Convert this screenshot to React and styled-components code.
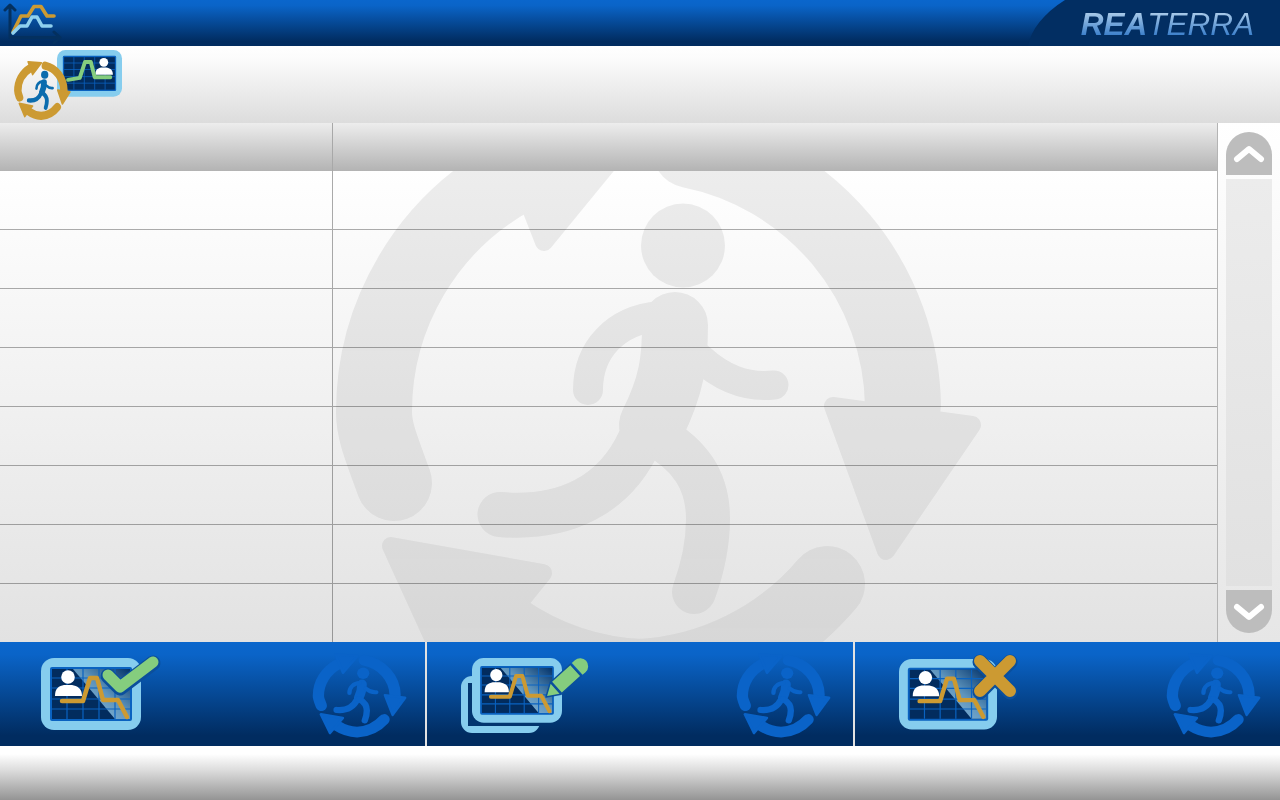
import React from "react";
import styled, { createGlobalStyle } from "styled-components";

const Global = createGlobalStyle`
  html, body {
    margin: 0;
    padding: 0;
    height: 100%;
    overflow: hidden;
    background: #fff;
    font-family: "Liberation Sans", Arial, sans-serif;
  }
`;

const Page = styled.div`
  width: 1280px;
  height: 800px;
  display: flex;
  flex-direction: column;
`;

const TopBar = styled.header`
  height: 46px;
  flex: none;
  display: flex;
  justify-content: space-between;
  background: linear-gradient(#0a66cc, #0a64c8 12%, #012c60 90%);
`;

const BrandTab = styled.div`
  width: 252px;
  height: 46px;
  box-sizing: border-box;
  padding: 1px 24px 0 0;
  display: flex;
  align-items: center;
  justify-content: flex-end;
  background: #022e62;
  clip-path: path("M0 46 C3 30 15 14 37 0 L252 0 L252 46 Z");
`;

const Brand = styled.div`
  font-size: 31.5px;
  line-height: 36px;
  font-style: italic;
  padding-right: 2px;
  background: linear-gradient(#a6c8e8 20%, #3f82cc 80%);
  -webkit-background-clip: text;
  background-clip: text;
  color: transparent;

  b {
    font-weight: 700;
  }
`;

const SubBar = styled.div`
  height: 77px;
  flex: none;
  box-sizing: border-box;
  padding: 4px 0 0 14px;
  display: flex;
  align-items: flex-start;
  background: linear-gradient(#fff, #fcfcfc 15%, #dcdcdc);
`;

const Main = styled.main`
  height: 519px;
  flex: none;
  display: flex;
`;

const Table = styled.section`
  width: 1217px;
  flex: none;
  display: flex;
  flex-direction: column;
`;

const HeadRow = styled.div`
  height: 48px;
  flex: none;
  display: grid;
  grid-template-columns: 333px 1fr;
  background: linear-gradient(#ededed, #b3b3b3);
`;

const HeadCell = styled.div`
  border-right: ${(p) => (p.$first ? "1px solid #a8a8a8" : "none")};
`;

const TableBody = styled.div`
  position: relative;
  flex: 1;
  overflow: hidden;
  background: linear-gradient(#fff, #e2e2e2);
`;

const Row = styled.div`
  position: relative;
  box-sizing: border-box;
  height: 59px;
  display: grid;
  grid-template-columns: 333px 1fr;
  border-bottom: 1px solid rgba(0, 0, 0, 0.32);

  &:last-child {
    border-bottom: none;
  }
`;

const Cell = styled.div`
  border-right: ${(p) => (p.$first ? "1px solid rgba(0, 0, 0, 0.33)" : "none")};
`;

const ScrollColumn = styled.aside`
  width: 63px;
  flex: none;
  box-sizing: border-box;
  padding: 9px 8px;
  display: flex;
  flex-direction: column;
  gap: 4px;
  border-left: 1px solid #b4b4b4;
  background: linear-gradient(#fff, #e6e6e6);
`;

const ScrollButton = styled.button`
  height: 43px;
  flex: none;
  padding: 0;
  border: none;
  display: flex;
  align-items: center;
  justify-content: center;
  background: #bdbdbd;
  border-radius: ${(p) => (p.$down ? "0 0 23px 23px" : "23px 23px 0 0")};
`;

const ScrollTrack = styled.div`
  flex: 1;
  background: linear-gradient(#ececec, #e1e1e1);
`;

const ActionBar = styled.footer`
  height: 104px;
  flex: none;
  display: grid;
  grid-template-columns: 425px 428px 427px;
`;

const ActionButton = styled.button`
  border: none;
  border-left: ${(p) => (p.$divided ? "2px solid #e2e2e2" : "none")};
  padding: 2px ${(p) => p.$right}px 0 ${(p) => p.$left}px;
  display: flex;
  align-items: center;
  justify-content: space-between;
  background: linear-gradient(#0a66cc, #0a64c8 12%, #012c60 90%);
`;

const BottomStrip = styled.div`
  flex: 1;
  background: linear-gradient(#fff 15%, #dcdcdc 45%, #949494);
`;

const Arrow = ({ points, fill }) => (
  <polygon points={points} fill={fill} stroke={fill} strokeWidth="18" strokeLinejoin="round" />
);

// ring and runner are drawn in the coordinates of the big watermark
const RunningRing = ({ className, ring, runner, weight = 76 }) => (
  <svg className={className} viewBox="330 90 655 630" preserveAspectRatio="none" aria-hidden="true">
    <g fill="none" stroke={ring} strokeWidth={weight} strokeLinecap="round">
      <path d="M690 150 A265 265 0 0 1 903 405" />
      <path d="M827 584 A265 265 0 0 1 641 677 A265 265 0 0 1 504 631" />
      <path d="M394 483 C380 445 374 430 374 412 A268 268 0 0 1 513 177" />
    </g>
    <Arrow fill={ring} points="833,406 972,425 886,551" />
    <Arrow fill={ring} points="544,242 492,109 644,120" />
    <Arrow fill={ring} points="543,573 454,684 391,546" />
    <ellipse cx="683" cy="245.5" rx="42" ry="42" fill={runner} />
    <g fill="none" stroke={runner} strokeLinecap="round">
      <path strokeWidth="66" d="M675 325 C675 360 672 385 652 425" />
      <path strokeWidth="30" d="M660 316 C615 320 588 350 588 390" />
      <path strokeWidth="29" d="M700 358 C722 378 745 388 774 385" />
      <path strokeWidth="45" d="M640 440 C615 495 565 520 500 514.5" />
      <path strokeWidth="44" d="M655 435 C690 455 708 480 708 519 C708 545 702 570 694 592" />
    </g>
  </svg>
);

const Watermark = styled(RunningRing)`
  position: absolute;
  left: 330px;
  top: -81px;
  width: 655px;
  height: 630px;
  opacity: 0.065;
  -webkit-mask-image: linear-gradient(#000 30%, rgba(0, 0, 0, 0.65));
  mask-image: linear-gradient(#000 30%, rgba(0, 0, 0, 0.65));
`;

const ButtonRing = styled(RunningRing)`
  flex: none;
  width: 95px;
  height: 86px;
`;

const BadgeRing = styled(RunningRing)`
  position: relative;
  flex: none;
  width: 57px;
  height: 60px;
  margin-top: 10px;
`;

const BadgeMonitor = styled.svg`
  flex: none;
  width: 66px;
  height: 48px;
  margin-left: -14px;
`;

const ActionIcon = styled.svg`
  flex: none;
  width: 140px;
  height: 90px;
`;

const Gloss = () => (
  <linearGradient id="gloss" x1="0" y1="1" x2="1" y2="0">
    <stop offset="0" stopColor="#9cc9e6" />
    <stop offset="0.55" stopColor="#5d94bd" />
    <stop offset="1" stopColor="#02326a" />
  </linearGradient>
);

// frame is 100 x 72 before scaling
const MonitorFrame = ({ x = 0, y = 0, scale = 1, gloss, children }) => (
  <g transform={`translate(${x} ${y}) scale(${scale})`}>
    <rect width="100" height="72" rx="13" fill="#86cdee" />
    <rect x="9" y="9" width="82" height="54" rx="2" fill="#0a62c0" />
    <rect x="11" y="11" width="78" height="50" fill="#022c5e" />
    {gloss && <polygon points="32,11 89,11 89,61 74,61" fill="url(#gloss)" />}
    <g stroke="#0a62c0" strokeWidth="1.2" fill="none">
      <path d="M26 11V61M42 11V61M58 11V61M74 11V61" />
      <path d="M11 20H89M11 30H89M11 41H89M11 51H89" />
    </g>
    {children}
  </g>
);

const Person = ({ dx = 0 }) => (
  <g transform={`translate(${dx} 0)`} fill="#fff">
    <circle cx="27" cy="19" r="6.8" />
    <path d="M14 38 C14 30 18 28 23 27 L31 27 C36 28 41 30 41 38 Z" />
  </g>
);

const TrendLine = ({ points, color, weight = 4.5 }) => (
  <polyline points={points} fill="none" stroke={color} strokeWidth={weight} strokeLinecap="round" strokeLinejoin="round" />
);

const GOLD = "#cc9a32";
const GREEN = "#85cd7e";
const EDGE = "#0b4f9c";
const ORANGE_LINE = "21,43 42,43 49,20 56,20 62,42 77,42 86,59";

const AppLogo = () => (
  <svg width="62" height="46" viewBox="0 0 62 46" aria-hidden="true" fill="none" strokeLinecap="round" strokeLinejoin="round">
    <path d="M10 37V6M5 10L10 5L15 10M10 37.5H58M54 32L60 37.5L54 43" stroke="#04305f" strokeWidth="3" />
    <polyline points="13,32 21,16 28,16 34,6.5 41,6.5 47,16 54,16" stroke={GOLD} strokeWidth="3.6" />
    <polyline points="13,33 20,26 27,26 32,17 37,17 42,26 51,26" stroke="#8fd0ee" strokeWidth="3.6" />
  </svg>
);

const AcceptIcon = () => (
  <ActionIcon viewBox="0 0 140 90" aria-hidden="true">
    <defs><Gloss /></defs>
    <MonitorFrame x={6} y={8} gloss>
      <Person />
      <TrendLine points={ORANGE_LINE} color={GOLD} />
    </MonitorFrame>
    <polyline points="73,26 85,38 118,13" fill="none" stroke={EDGE} strokeWidth="15" strokeLinecap="round" strokeLinejoin="round" />
    <polyline points="73,25 85,37 118,12" fill="none" stroke={GREEN} strokeWidth="11" strokeLinecap="round" strokeLinejoin="round" />
  </ActionIcon>
);

const EditIcon = () => (
  <ActionIcon viewBox="0 0 140 90" aria-hidden="true">
    <defs><Gloss /></defs>
    <rect x="6" y="26" width="79" height="57" rx="11" fill="#86cdee" />
    <rect x="13" y="33" width="72" height="43" fill="#02356f" />
    <MonitorFrame x={17} y={8} scale={0.9} gloss>
      <Person />
      <TrendLine points={ORANGE_LINE} color={GOLD} />
    </MonitorFrame>
    <g transform="translate(91 47) rotate(-42)">
      <polygon points="0,0 13,-8 13,8" fill={GREEN} stroke={EDGE} strokeWidth="1.5" strokeLinejoin="round" />
      <rect x="14" y="-8" width="26" height="16" fill={GREEN} stroke={EDGE} strokeWidth="1.5" />
      <path d="M42 -8 H46 A8 8 0 0 1 46 8 H42 Z" fill={GREEN} />
    </g>
  </ActionIcon>
);

const RejectIcon = () => (
  <ActionIcon viewBox="0 0 140 90" aria-hidden="true">
    <defs><Gloss /></defs>
    <MonitorFrame x={6} y={9} scale={0.98} gloss>
      <Person />
      <TrendLine points={ORANGE_LINE} color={GOLD} />
    </MonitorFrame>
    <path d="M87 12L117 42M117 12L87 42" fill="none" stroke={EDGE} strokeWidth="15" strokeLinecap="round" />
    <path d="M87 11L117 41M117 11L87 41" fill="none" stroke={GOLD} strokeWidth="12" strokeLinecap="round" />
  </ActionIcon>
);

const Chevron = ({ down }) => (
  <svg width="34" height="20" viewBox="0 0 34 20" aria-hidden="true">
    <polyline
      points={down ? "5,5 17,15 29,5" : "5,15 17,5 29,15"}
      fill="none"
      stroke="#fff"
      strokeWidth="6"
      strokeLinecap="round"
      strokeLinejoin="round"
    />
  </svg>
);

const rows = [0, 1, 2, 3, 4, 5, 6, 7];

const actions = [
  { key: "accept", Icon: AcceptIcon, left: 35, right: 18 },
  { key: "edit", Icon: EditIcon, left: 28, right: 22, divided: true },
  { key: "reject", Icon: RejectIcon, left: 38, right: 19, divided: true },
];

const App = () => {
  return (
    <Page>
      <Global />
      <TopBar>
        <AppLogo />
        <BrandTab>
          <Brand>
            <b>REA</b>TERRA
          </Brand>
        </BrandTab>
      </TopBar>
      <SubBar>
        <BadgeRing ring={GOLD} runner="#0b6cae" weight={86} />
        <BadgeMonitor viewBox="0 0 66 48" aria-hidden="true">
          <MonitorFrame scale={0.65}>
            <Person dx={45} />
            <TrendLine points="17,46 35,43 43,18.5 52,18.5 58,42 82,42" color={GREEN} weight={6} />
          </MonitorFrame>
        </BadgeMonitor>
      </SubBar>
      <Main>
        <Table>
          <HeadRow>
            <HeadCell $first />
            <HeadCell />
          </HeadRow>
          <TableBody>
            <Watermark ring="#000" runner="#000" />
            {rows.map((r) => (
              <Row key={r}>
                <Cell $first />
                <Cell />
              </Row>
            ))}
          </TableBody>
        </Table>
        <ScrollColumn>
          <ScrollButton aria-label="up">
            <Chevron />
          </ScrollButton>
          <ScrollTrack />
          <ScrollButton $down aria-label="down">
            <Chevron down />
          </ScrollButton>
        </ScrollColumn>
      </Main>
      <ActionBar>
        {actions.map(({ key, Icon, left, right, divided }) => (
          <ActionButton key={key} $left={left} $right={right} $divided={divided} aria-label={key}>
            <Icon />
            <ButtonRing ring="#0a63c8" runner="#0a63c8" weight={78} />
          </ActionButton>
        ))}
      </ActionBar>
      <BottomStrip />
    </Page>
  );
};

export default App;
